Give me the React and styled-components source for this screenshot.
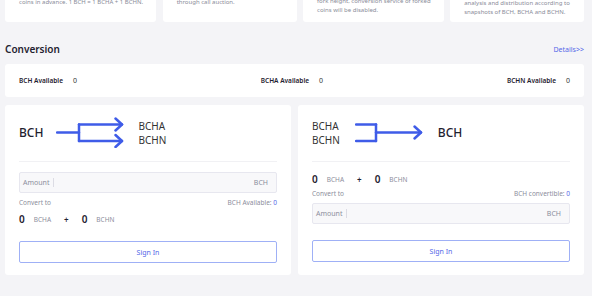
import React from "react";
import styled, { createGlobalStyle } from "styled-components";

const Global = createGlobalStyle`
  html, body { margin: 0; padding: 0; background: #f4f4f7; overflow: hidden; }
  body { font-family: "Noto Sans", "Open Sans", sans-serif; color: #1f2230; }
`;

const Page = styled.div`
  padding: 0 8px 0 5px;
`;

const TopRow = styled.div`
  display: grid;
  grid-template-columns: repeat(4, 1fr);
  column-gap: 6.5px;
  margin-top: -30px;
`;

const InfoCard = styled.div`
  background: #fff;
  border-radius: 3px;
  height: 52px;
  box-sizing: border-box;
  padding: 0 13px ${(p) => p.$pb}px 14px;
  display: flex;
  flex-direction: column;
  justify-content: flex-end;
`;

const InfoLine = styled.div`
  font-size: 6px;
  line-height: 9px;
  color: #8a8c99;
  white-space: nowrap;
`;

const HeadRow = styled.div`
  display: flex;
  align-items: center;
  justify-content: space-between;
  height: 20px;
  margin: 17px 0 5px;
`;

const Title = styled.h2`
  margin: 0;
  font-size: 10px;
  font-weight: 600;
  color: #1f2230;
`;

const DetailsLink = styled.a`
  font-size: 7px;
  color: #5468e8;
  text-decoration: none;
`;

const AvailBar = styled.div`
  background: #fff;
  border-radius: 3px;
  height: 33px;
  padding: 0 14px;
  display: flex;
  align-items: center;
  justify-content: space-between;
`;

const AvailItem = styled.div`
  display: flex;
  align-items: center;
  gap: 10px;
  font-size: 6.5px;
`;

const AvailLabel = styled.span`
  font-weight: 600;
  color: #1f2230;
`;

const AvailValue = styled.span`
  color: #333;
  font-size: 7px;
`;

const Cards = styled.div`
  display: grid;
  grid-template-columns: 1fr 1fr;
  column-gap: 7px;
  margin-top: 8px;
`;

const Card = styled.div`
  background: #fff;
  border-radius: 3px;
  padding: 12px 14px 12px;
  display: flex;
  flex-direction: column;
`;

const Diagram = styled.div`
  height: 31px;
  display: flex;
  align-items: center;
`;

const BigCoin = styled.span`
  font-size: 12px;
  font-weight: 500;
  color: #1f2230;
`;

const CoinStack = styled.div`
  display: flex;
  flex-direction: column;
  font-size: 10px;
  line-height: 14px;
  color: #333;
`;

const Divider = styled.div`
  height: 1px;
  background: #f1f1f4;
  margin-top: 13px;
`;

const AmountBox = styled.div`
  margin-top: ${(p) => p.$mt}px;
  height: 21px;
  box-sizing: border-box;
  background: #f8f8fa;
  border: 1px solid #e7e7ef;
  border-radius: 2px;
  display: flex;
  align-items: center;
  padding: 0 8px 0 3px;
  font-size: 7px;
  color: #8c8e9c;
`;

const AmountLabel = styled.span`
  padding-right: 4px;
  border-right: 1px solid #dcdce4;
  line-height: 9px;
`;

const Unit = styled.span`
  margin-left: auto;
`;

const InfoRow = styled.div`
  margin-top: ${(p) => p.$mt}px;
  display: flex;
  justify-content: space-between;
  align-items: center;
  font-size: 6.5px;
  line-height: 10px;
  color: #8c8e9c;
`;

const Blue = styled.span`
  color: #5468e8;
`;

const SumRow = styled.div`
  margin-top: ${(p) => p.$mt}px;
  display: flex;
  align-items: center;
  height: 12px;
`;

const Num = styled.span`
  font-size: 10px;
  font-weight: 600;
  color: #1f2230;
  margin-right: 9px;
`;

const SmallCoin = styled.span`
  font-size: 6.5px;
  color: #8c8e9c;
`;

const Plus = styled.span`
  font-size: 8px;
  font-weight: 600;
  margin: 0 13px;
  color: #1f2230;
`;

const SignIn = styled.button`
  margin-top: ${(p) => p.$mt}px;
  height: 22px;
  width: 100%;
  background: #fff;
  border: 1px solid #9fb0f6;
  border-radius: 2px;
  font-family: inherit;
  font-size: 7px;
  color: #5468e8;
  cursor: pointer;
`;

const ArrowSvg = styled.svg`
  display: block;
  flex: none;
  margin: ${(p) => p.$m};
`;

const BLUE = "#3f5ce8";

const SplitArrow = () => (
  <ArrowSvg width="68" height="31" viewBox="0 0 68 31" $m="0 14px 0 13px">
    <g fill="none" stroke={BLUE} strokeWidth="2.5" strokeLinecap="round" strokeLinejoin="round">
      <path d="M1 15.5 H23" />
      <path d="M23 7.5 V24" />
      <path d="M23 7.5 H66" />
      <path d="M23 24 H66" />
      <path d="M59.5 1.5 L66 7.5 L59.5 13.5" />
      <path d="M59.5 18 L66 24 L59.5 30" />
    </g>
  </ArrowSvg>
);

const MergeArrow = () => (
  <ArrowSvg width="68" height="31" viewBox="0 0 68 31" $m="0 15px 0 15px">
    <g fill="none" stroke={BLUE} strokeWidth="2.5" strokeLinecap="round" strokeLinejoin="round">
      <path d="M1 7.5 H21" />
      <path d="M1 24 H21" />
      <path d="M21 7.5 V24" />
      <path d="M21 15.5 H66" />
      <path d="M59.5 9.5 L66 15.5 L59.5 21.5" />
    </g>
  </ArrowSvg>
);

const Sum = () => (
  <>
    <Num>0</Num>
    <SmallCoin>BCHA</SmallCoin>
    <Plus>+</Plus>
    <Num>0</Num>
    <SmallCoin>BCHN</SmallCoin>
  </>
);

export default function App() {
  return (
    <Page>
      <Global />
      <TopRow>
        <InfoCard $pb={15}>
          <InfoLine>coins in advance. 1 BCH = 1 BCHA + 1 BCHN.</InfoLine>
        </InfoCard>
        <InfoCard $pb={15}>
          <InfoLine>through call auction.</InfoLine>
        </InfoCard>
        <InfoCard $pb={7.5}>
          <InfoLine>fork height, conversion service of forked</InfoLine>
          <InfoLine>coins will be disabled.</InfoLine>
        </InfoCard>
        <InfoCard $pb={5.5}>
          <InfoLine>analysis and distribution according to</InfoLine>
          <InfoLine>snapshots of BCH, BCHA and BCHN.</InfoLine>
        </InfoCard>
      </TopRow>

      <HeadRow>
        <Title>Conversion</Title>
        <DetailsLink href="#">Details&gt;&gt;</DetailsLink>
      </HeadRow>

      <AvailBar>
        <AvailItem>
          <AvailLabel>BCH Available</AvailLabel>
          <AvailValue>0</AvailValue>
        </AvailItem>
        <AvailItem>
          <AvailLabel>BCHA Available</AvailLabel>
          <AvailValue>0</AvailValue>
        </AvailItem>
        <AvailItem>
          <AvailLabel>BCHN Available</AvailLabel>
          <AvailValue>0</AvailValue>
        </AvailItem>
      </AvailBar>

      <Cards>
        <Card>
          <Diagram>
            <BigCoin>BCH</BigCoin>
            <SplitArrow />
            <CoinStack>
              <span>BCHA</span>
              <span>BCHN</span>
            </CoinStack>
          </Diagram>
          <Divider />
          <AmountBox $mt={10}>
            <AmountLabel>Amount</AmountLabel>
            <Unit>BCH</Unit>
          </AmountBox>
          <InfoRow $mt={5}>
            <span>Convert to</span>
            <span>
              BCH Available: <Blue>0</Blue>
            </span>
          </InfoRow>
          <SumRow $mt={5}>
            <Sum />
          </SumRow>
          <SignIn $mt={16}>Sign In</SignIn>
        </Card>

        <Card>
          <Diagram>
            <CoinStack>
              <span>BCHA</span>
              <span>BCHN</span>
            </CoinStack>
            <MergeArrow />
            <BigCoin>BCH</BigCoin>
          </Diagram>
          <Divider />
          <SumRow $mt={11}>
            <Sum />
          </SumRow>
          <InfoRow $mt={4}>
            <span>Convert to</span>
            <span>
              BCH convertible: <Blue>0</Blue>
            </span>
          </InfoRow>
          <AmountBox $mt={4}>
            <AmountLabel>Amount</AmountLabel>
            <Unit>BCH</Unit>
          </AmountBox>
          <SignIn $mt={16}>Sign In</SignIn>
        </Card>
      </Cards>
    </Page>
  );
}
